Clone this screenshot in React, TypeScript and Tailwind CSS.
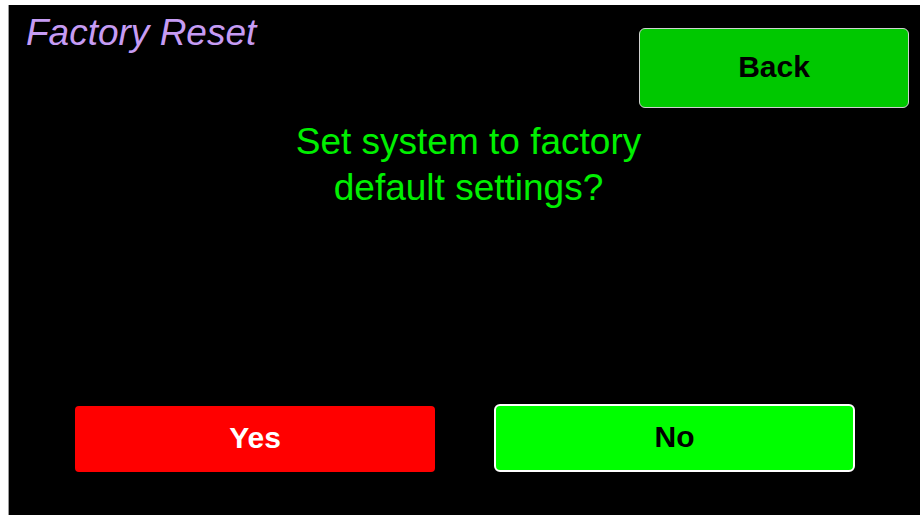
import React from "react";

const font = { fontFamily: '"Liberation Sans", Arial, sans-serif' };

const App = () => {
  return (
    <div
      className="w-[920px] h-[515px] bg-white pt-[5px] pl-[8px] flex"
      style={font}
    >
      <div className="flex-1 bg-black border-l border-[#9a9a9a] flex flex-col">
        {/* header */}
        <div className="flex justify-between items-start">
          <div className="ml-[17px] mt-[7px] text-[37px] leading-[41px] italic text-[#c69cf4]">
            Factory Reset
          </div>
          <button className="mt-[23px] mr-[11px] w-[270px] h-[80px] pb-[4px] bg-[#00c800] border border-[#d0d0d0] rounded-[6px] text-[30px] font-bold text-black">
            Back
          </button>
        </div>

        {/* message */}
        <div className="mt-[11px] pl-[8px] text-center text-[37px] leading-[46px] text-[#00f000]">
          Set system to factory
          <br />
          default settings?
        </div>

        <div className="flex-1" />

        {/* actions */}
        <div className="flex items-end gap-[59px] pl-[66px] pb-[43px]">
          <button className="w-[360px] h-[66px] pb-[4px] bg-[#ff0000] rounded-[4px] text-[30px] font-bold text-white">
            Yes
          </button>
          <button className="w-[361px] h-[68px] pb-[4px] bg-[#00ff00] border-2 border-white rounded-[6px] text-[30px] font-bold text-black">
            No
          </button>
        </div>
      </div>
    </div>
  );
};

export default App;
